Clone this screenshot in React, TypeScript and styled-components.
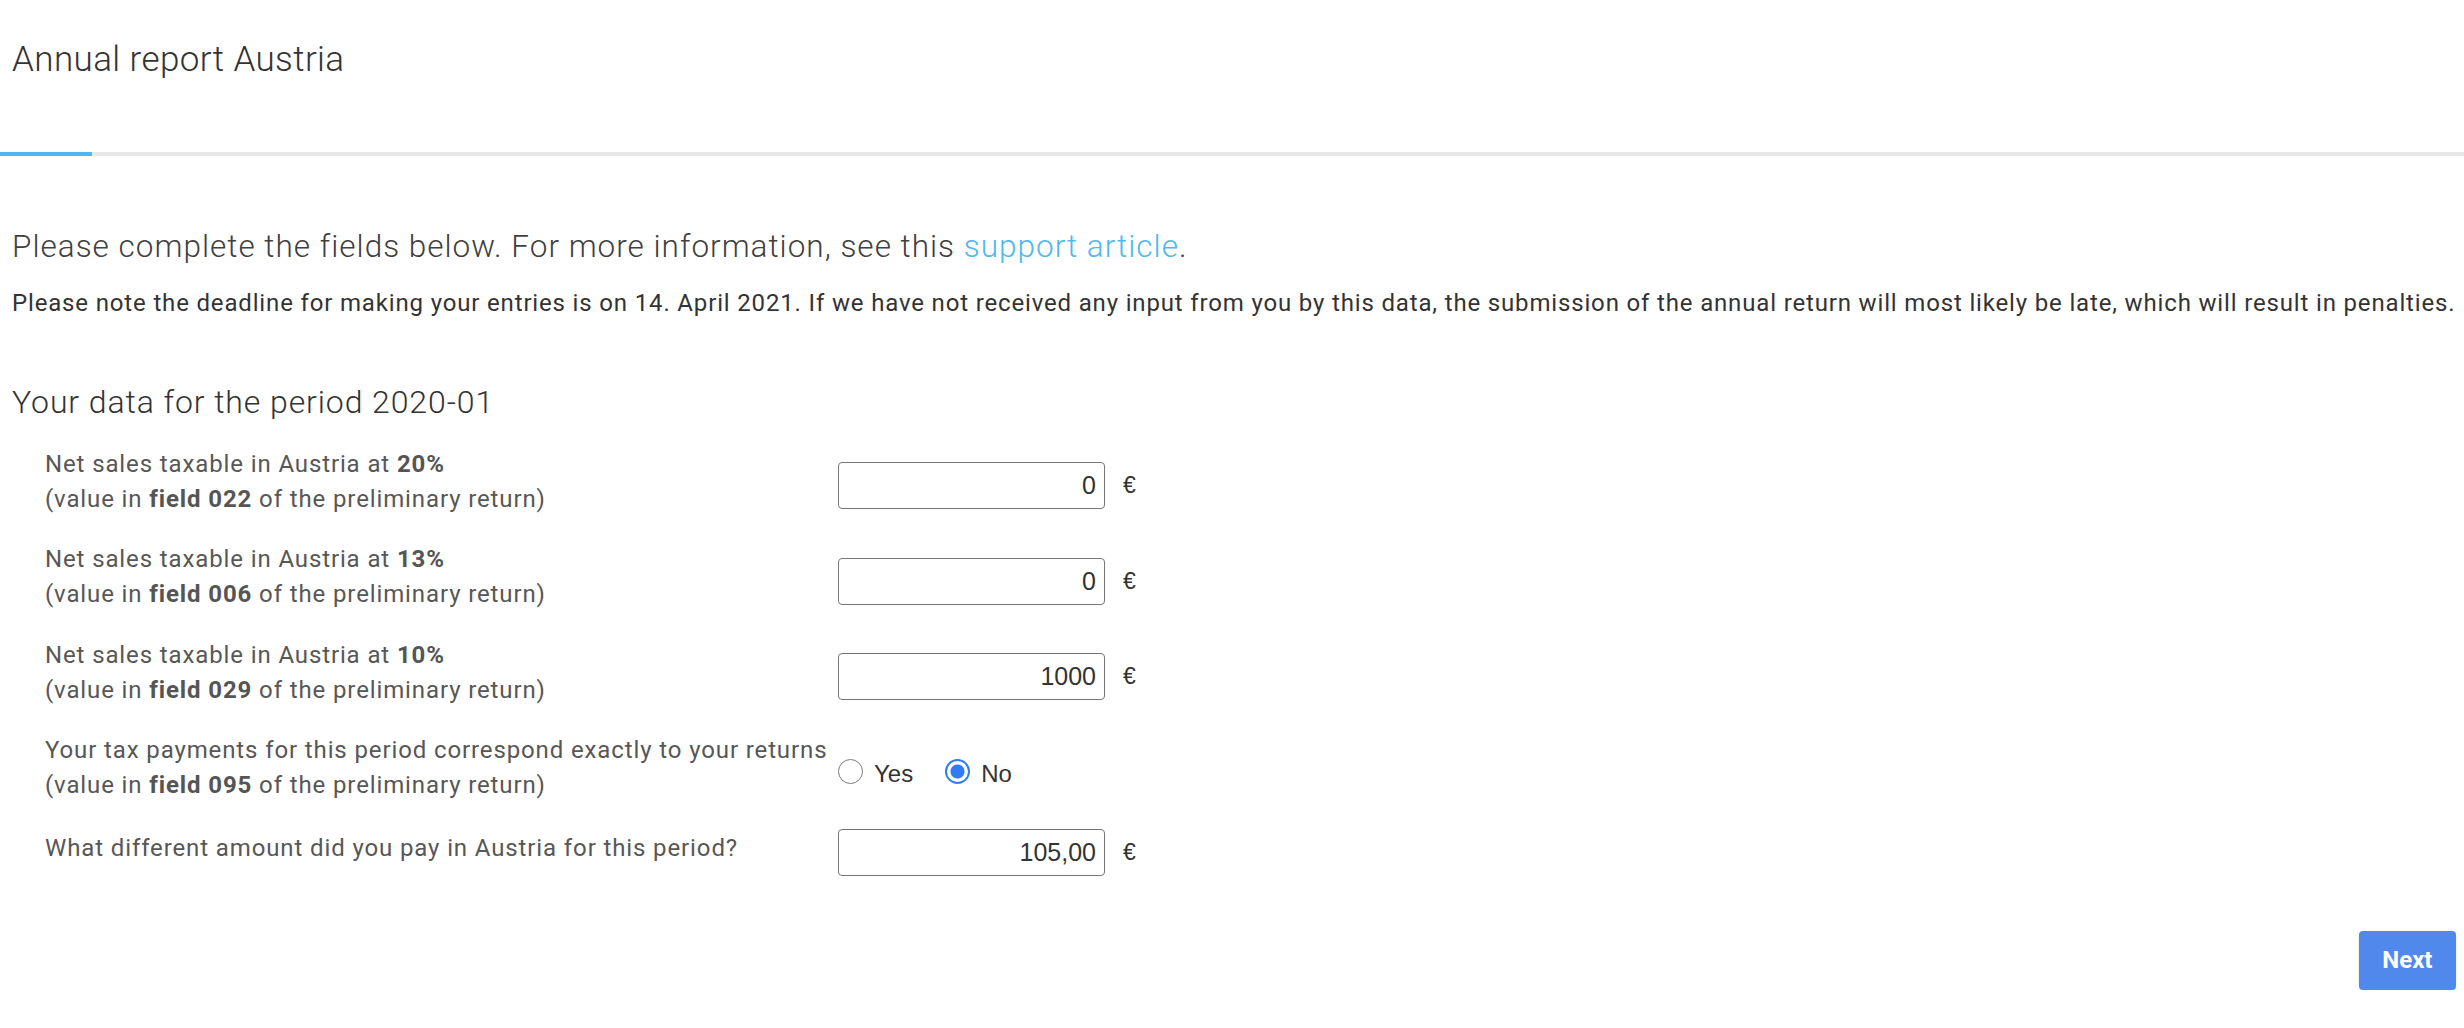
import React from "react";
import styled, { createGlobalStyle } from "styled-components";

type Field =
  | { kind: "amount"; line1: React.ReactNode; line2?: React.ReactNode; value: string }
  | { kind: "choice"; line1: React.ReactNode; line2?: React.ReactNode; selected: "yes" | "no" };

const fields: Field[] = [
  {
    kind: "amount",
    line1: <>Net sales taxable in Austria at <b>20%</b></>,
    line2: <>(value in <b>field 022</b> of the preliminary return)</>,
    value: "0",
  },
  {
    kind: "amount",
    line1: <>Net sales taxable in Austria at <b>13%</b></>,
    line2: <>(value in <b>field 006</b> of the preliminary return)</>,
    value: "0",
  },
  {
    kind: "amount",
    line1: <>Net sales taxable in Austria at <b>10%</b></>,
    line2: <>(value in <b>field 029</b> of the preliminary return)</>,
    value: "1000",
  },
  {
    kind: "choice",
    line1: <>Your tax payments for this period correspond exactly to your returns</>,
    line2: <>(value in <b>field 095</b> of the preliminary return)</>,
    selected: "no",
  },
  {
    kind: "amount",
    line1: <>What different amount did you pay in Austria for this period?</>,
    value: "105,00",
  },
];

function App() {
  const progress = 92 / 2464;

  return (
    <>
      <GlobalStyle />
      <Page>
        <Header>
          <Title>Annual report Austria</Title>
        </Header>
        <Track>
          <Fill style={{ width: `${progress * 100}%` }} />
        </Track>

        <Content>
          <Lead>
            Please complete the fields below. For more information, see this{" "}
            <Link href="#">support article</Link>.
          </Lead>
          <Note>
            Please note the deadline for making your entries is on 14. April 2021. If we have not
            received any input from you by this data, the submission of the annual return will most
            likely be late, which will result in penalties.
          </Note>

          <SectionTitle>Your data for the period 2020-01</SectionTitle>

          <Rows>
            {fields.map((field, i) => (
              <Row key={i}>
                <Label>
                  {field.line1}
                  {field.line2 ? (
                    <>
                      <br />
                      {field.line2}
                    </>
                  ) : null}
                </Label>
                {field.kind === "amount" ? (
                  <AmountGroup>
                    <AmountInput type="text" defaultValue={field.value} />
                    <Currency>€</Currency>
                  </AmountGroup>
                ) : (
                  <RadioGroup>
                    <RadioOption>
                      <Radio type="radio" name={`q${i}`} defaultChecked={field.selected === "yes"} />
                      Yes
                    </RadioOption>
                    <RadioOption>
                      <Radio type="radio" name={`q${i}`} defaultChecked={field.selected === "no"} />
                      No
                    </RadioOption>
                  </RadioGroup>
                )}
              </Row>
            ))}
          </Rows>

          <Footer>
            <NextButton type="button">Next</NextButton>
          </Footer>
        </Content>
      </Page>
    </>
  );
}

const GlobalStyle = createGlobalStyle`
  html, body {
    margin: 0;
    padding: 0;
    background: #ffffff;
  }

  body {
    font-family: Roboto, "Liberation Sans", sans-serif;
    color: #333333;
  }
`;

const Page = styled.div`
  display: flex;
  flex-direction: column;
  width: 100%;
`;

const Header = styled.header`
  box-sizing: border-box;
  height: 152px;
  padding: 39px 12px 0;
`;

const Title = styled.h1`
  margin: 0;
  font-size: 35px;
  font-weight: 300;
  line-height: 42px;
  letter-spacing: 0.4px;
  color: #333333;
`;

const Track = styled.div`
  height: 4px;
  background: #e8e8e8;
`;

const Fill = styled.div`
  height: 100%;
  background: #4db8f2;
`;

const Content = styled.main`
  display: flex;
  flex-direction: column;
  padding: 0 8px 0 12px;
`;

const Lead = styled.p`
  margin: 71px 0 0;
  font-size: 31.5px;
  font-weight: 300;
  line-height: 40px;
  letter-spacing: 1px;
  color: #404040;
`;

const Link = styled.a`
  color: #4db8f2;
  text-decoration: none;
`;

const Note = styled.p`
  margin: 19px 0 0;
  font-size: 24px;
  font-weight: 400;
  line-height: 35px;
  letter-spacing: 0.84px;
  color: #333333;
  white-space: nowrap;
`;

const SectionTitle = styled.h2`
  margin: 60px 0 0;
  font-size: 32px;
  font-weight: 300;
  line-height: 42px;
  letter-spacing: 0.9px;
  color: #333333;
`;

const Rows = styled.div`
  display: flex;
  flex-direction: column;
  gap: 17.5px;
  margin-top: 23.5px;
  padding-left: 33px;
`;

const Row = styled.div`
  display: grid;
  grid-template-columns: 793px auto;
  align-items: center;
`;

const Label = styled.div`
  padding-bottom: 8px;
  font-size: 24px;
  line-height: 35px;
  letter-spacing: 0.88px;
  color: #575757;
  white-space: nowrap;

  b {
    font-weight: 700;
    color: #555555;
  }
`;

const AmountGroup = styled.div`
  display: flex;
  align-items: center;
  gap: 18px;
`;

const AmountInput = styled.input`
  box-sizing: border-box;
  width: 267px;
  height: 47px;
  padding: 0 8px;
  border: 1.5px solid #767676;
  border-radius: 4px;
  font-family: "Liberation Sans", Arial, sans-serif;
  font-size: 25px;
  color: #333333;
  text-align: right;
  outline: none;
`;

const Currency = styled.span`
  font-family: "Liberation Sans", Arial, sans-serif;
  font-size: 23px;
  color: #333333;
`;

const RadioGroup = styled.div`
  display: flex;
  align-items: center;
  gap: 32px;
`;

const RadioOption = styled.label`
  display: flex;
  align-items: center;
  gap: 11px;
  font-family: "Liberation Sans", Arial, sans-serif;
  font-size: 24px;
  color: #333333;
  padding-top: 4px;
`;

const Radio = styled.input`
  appearance: none;
  box-sizing: border-box;
  width: 25px;
  height: 25px;
  margin: -6px 0 0;
  border: 1.5px solid #7d7d7d;
  border-radius: 50%;
  background: #ffffff;

  &:checked {
    border: 2.5px solid #2f7cf6;
    background: radial-gradient(circle, #2f7cf6 0 6.5px, #ffffff 7.5px);
  }
`;

const Footer = styled.div`
  display: flex;
  justify-content: flex-end;
  margin-top: 55px;
`;

const NextButton = styled.button`
  height: 59px;
  padding: 0 23.5px;
  border: none;
  border-radius: 4px;
  background: #5088ec;
  box-shadow: 0 1px 3px rgb(0 0 0 / 12%);
  font-family: Roboto, "Liberation Sans", sans-serif;
  font-size: 24px;
  font-weight: 700;
  color: #ffffff;
  cursor: pointer;
`;

export default App;
